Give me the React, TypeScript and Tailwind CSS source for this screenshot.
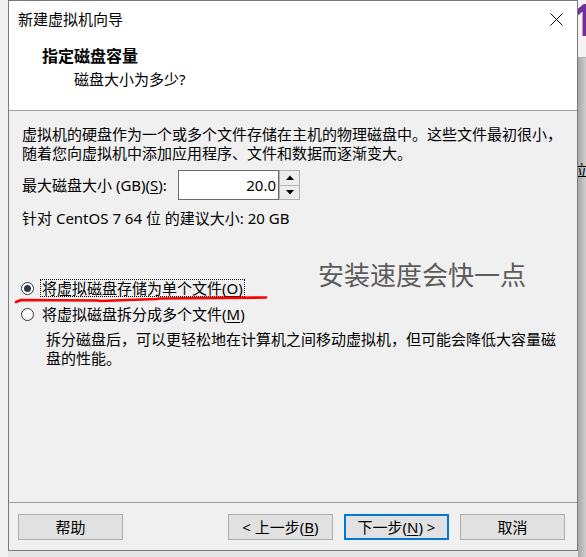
import React from "react";

function U({ c }: { c: string }) {
  return <span className="underline underline-offset-[2px] decoration-1">{c}</span>;
}

function Btn({ children, primary }: { children: React.ReactNode; primary?: boolean }) {
  return (
    <div
      className={
        primary
          ? "flex h-[26px] w-[105px] items-center justify-center border-2 border-[#0078d7] bg-[#e1e1e1] text-[15px] leading-none text-black"
          : "flex h-[26px] w-[105px] items-center justify-center border border-[#adadad] bg-[#e1e1e1] text-[15px] leading-none text-black"
      }
    >
      {children}
    </div>
  );
}

export default function App() {
  return (
    <div className="relative flex h-[557px] w-[586px] overflow-hidden bg-[#ececec] font-['Noto_Sans','Noto_Sans_CJK_SC',sans-serif] text-black">
      {/* left strip */}
      <div className="h-full w-[8px] bg-[#f0f0f0]" />

      {/* dialog column */}
      <div className="flex h-full w-[570px] flex-col">
        <div className="relative flex h-[551px] w-[570px] flex-col border border-[#7a7a7a] bg-[#f0f0f0]">
          {/* header */}
          <div className="flex h-[110px] flex-col border-b border-[#a0a0a0] bg-white">
            <div className="flex h-[36px] items-center justify-between pl-[9px] pr-[14px]">
              <span className="text-[15px] leading-[20px]">新建虚拟机向导</span>
              <svg width="13" height="13" viewBox="0 0 13 13" className="block">
                <path d="M0.5 0.5 L12.5 12.5 M12.5 0.5 L0.5 12.5" stroke="#000" strokeWidth="1" fill="none" />
              </svg>
            </div>
            <div className="mt-[9px] pl-[33px] text-[16px] font-bold leading-[20px]">指定磁盘容量</div>
            <div className="mt-[3px] pl-[65px] text-[15px] leading-[20px]">磁盘大小为多少?</div>
          </div>

          {/* body */}
          <div className="flex flex-1 flex-col">
            <div className="whitespace-nowrap pl-[13px] pt-[14px] text-[15px] leading-[19px]">
              虚拟机的硬盘作为一个或多个文件存储在主机的物理磁盘中。这些文件最初很小，
              <br />
              随着您向虚拟机中添加应用程序、文件和数据而逐渐变大。
            </div>

            <div className="mt-[7px] flex h-[30px] items-center pl-[13px]">
              <div className="w-[156px] whitespace-nowrap text-[15px] leading-[20px]">
                最大磁盘大小 (GB)(<U c="S" />):
              </div>
              <div className="flex h-[30px] w-[101px] items-center justify-end border border-[#6a6a6a] bg-white pr-[2px] text-[15px] leading-none">
                20.0
              </div>
              <div className="flex h-[30px] w-[21px] flex-col border border-[#b0b0b0] bg-[#f0f0f0]">
                <div className="flex flex-1 items-center justify-center border-b border-[#b8b8b8] bg-[#ececec]">
                  <svg width="8" height="5" viewBox="0 0 8 5">
                    <path d="M0 5 L4 0.5 L8 5 Z" fill="#000" />
                  </svg>
                </div>
                <div className="flex flex-1 items-center justify-center bg-[#ececec]">
                  <svg width="8" height="5" viewBox="0 0 8 5">
                    <path d="M0 0 L4 4.5 L8 0 Z" fill="#000" />
                  </svg>
                </div>
              </div>
            </div>

            <div className="mt-[8px] whitespace-nowrap pl-[13px] text-[15px] leading-[20px]">
              针对 CentOS 7 64 位 的建议大小: 20 GB
            </div>

            <div className="mt-[50px] flex h-[20px] items-center pl-[12px]">
              <div className="flex h-[13px] w-[13px] items-center justify-center rounded-full border border-[#333] bg-white">
                <div className="h-[7px] w-[7px] rounded-full bg-[#2a3a4c]" />
              </div>
              <div className="ml-[6px] border border-dotted border-black px-[1px] text-[15px] leading-[16px] whitespace-nowrap">
                将虚拟磁盘存储为单个文件(<U c="O" />)
              </div>
            </div>

            <div className="mt-[6px] flex h-[20px] items-center pl-[12px]">
              <div className="h-[13px] w-[13px] rounded-full border border-[#333] bg-white" />
              <div className="ml-[8px] whitespace-nowrap text-[15px] leading-[16px]">
                将虚拟磁盘拆分成多个文件(<U c="M" />)
              </div>
            </div>

            <div className="mt-[6px] whitespace-nowrap pl-[37px] text-[15px] leading-[19px]">
              拆分磁盘后，可以更轻松地在计算机之间移动虚拟机，但可能会降低大容量磁
              <br />
              盘的性能。
            </div>
          </div>

          {/* footer */}
          <div className="flex h-[48px] items-start justify-between border-t border-[#a0a0a0] pl-[9px] pr-[12px] pt-[11px]">
            <Btn>帮助</Btn>
            <div className="flex gap-[11px]">
              <Btn>
                &lt; 上一步(<U c="B" />)
              </Btn>
              <Btn primary>
                下一步(<U c="N" />) &gt;
              </Btn>
              <Btn>取消</Btn>
            </div>
          </div>

          {/* annotation text */}
          <div className="absolute left-[309px] top-[261px] whitespace-nowrap text-[26px] leading-[26px] text-[#5c5c5c]">
            安装速度会快一点
          </div>
        </div>
        <div className="flex-1 bg-[#e6e6e6]" />
      </div>

      {/* right strip */}
      <div className="flex h-full w-[8px] flex-col overflow-hidden">
        <div className="h-[57px] overflow-hidden bg-[#f4f4f4]">
          <div className="-ml-[7px] -mt-[3px] text-[44px] font-bold leading-[44px] text-[#7030a0]">1</div>
        </div>
        <div className="flex-1 overflow-hidden border-t border-[#b0b0b0] bg-gradient-to-r from-[#a8a8a8] to-[#cdcdcd]">
          <div className="-ml-[6px] mt-[102px] text-[15px] leading-[20px] text-black">拉</div>
        </div>
      </div>

      {/* red hand-drawn underline */}
      <svg className="pointer-events-none absolute left-0 top-0" width="586" height="557" viewBox="0 0 586 557">
        <path
          d="M16 302 L21 300 L98 300.5 L100 301 L156 299 L160 298.5 L266 297.5"
          stroke="#ff0000"
          strokeWidth="2.6"
          fill="none"
          strokeLinecap="round"
          strokeLinejoin="round"
        />
      </svg>
    </div>
  );
}
